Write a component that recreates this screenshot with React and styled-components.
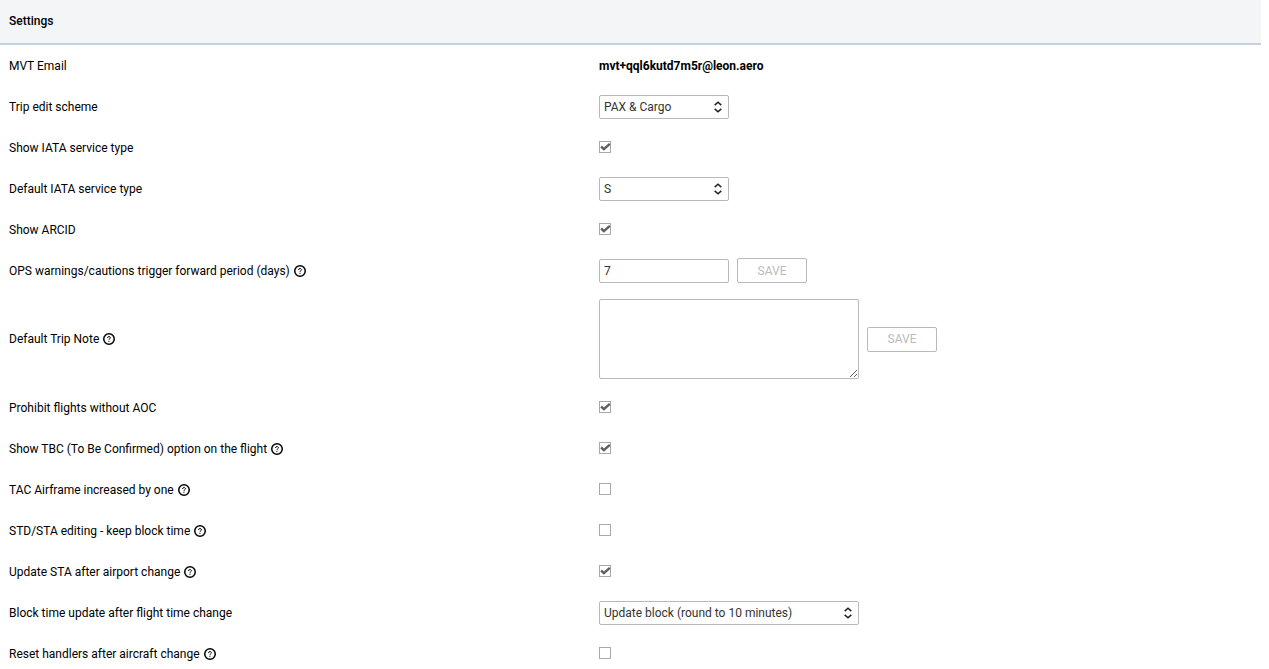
import React, { useId, useState } from "react";
import styled, { createGlobalStyle, css } from "styled-components";

const GlobalStyle = createGlobalStyle`
  *, *::before, *::after { box-sizing: border-box; }
  html { scrollbar-width: none; }
  body {
    margin: 0;
    background: #fff;
    color: #000;
    font: 12px/16px Roboto, "Liberation Sans", sans-serif;
  }
`;

const Panel = styled.main`
  margin-right: 8px;
`;

const PanelHeader = styled.header`
  padding: 13px 9px 14px;
  background: #f4f5f7;
  border-bottom: 2px solid #c3d1e1;
`;

const Title = styled.h1`
  margin: 0;
  font-size: 12px;
  line-height: 16px;
  font-weight: 500;
`;

const SettingRow = styled.div`
  display: grid;
  grid-template-columns: 590fr 671fr;
  align-items: center;
  min-height: 41px;
`;

const LabelCell = styled.div`
  display: flex;
  align-items: center;
  gap: 4px;
  padding: 8px 9px;
`;

const ControlCell = styled.div`
  display: flex;
  align-items: center;
  gap: 8px;
  padding: 8px 9px;
`;

const field = css`
  border: 1px solid #b9b9b9;
  border-radius: 2px;
  background: #fff;
  color: #333;
  font: inherit;
  outline-color: #7c9cc0;
`;

const SelectBox = styled.div`
  position: relative;
  width: ${(p) => (p.$wide ? 260 : 130)}px;
  height: 24px;
`;

const Select = styled.select`
  ${field}
  display: block;
  width: 100%;
  height: 24px;
  padding: 0 20px 0 4px;
  appearance: none;
`;

const SelectArrows = styled.svg`
  position: absolute;
  top: 6px;
  right: 6px;
  width: 10px;
  height: 12px;
  pointer-events: none;
`;

const TextInput = styled.input`
  ${field}
  width: 130px;
  height: 24px;
  padding: 0 4px;
`;

const TextArea = styled.textarea`
  ${field}
  width: 260px;
  height: 80px;
  padding: 4px;
  resize: both;
`;

const SaveButton = styled.button`
  width: 70px;
  height: 25px;
  padding: 0;
  border: 1px solid #b9b9b9;
  border-radius: 2px;
  background: #fff;
  color: #bbb;
  font: inherit;
`;

const CheckWrap = styled.span`
  position: relative;
  display: block;
  width: 12px;
  height: 12px;
  margin-bottom: 1px;
`;

const CheckInput = styled.input`
  display: block;
  width: 12px;
  height: 12px;
  margin: 0;
  border: 1px solid #a9a9a9;
  background: #fff;
  appearance: none;
`;

const CheckMark = styled.svg`
  position: absolute;
  inset: 0;
  pointer-events: none;
`;

const HelpSvg = styled.svg`
  display: block;
  width: 12px;
  height: 12px;
`;

const Address = styled.strong`
  font-weight: 700;
`;

function HelpIcon() {
  return (
    <HelpSvg viewBox="0 0 12 12" fill="none" stroke="#000" aria-hidden="true">
      <circle cx="6" cy="6" r="5.25" strokeWidth="1.5" />
      <path d="M4.4 4.9c.1-.9.8-1.3 1.6-1.3s1.5.4 1.5 1.1c0 .9-1.4 1-1.5 2.1" strokeWidth="1" />
      <path d="M5.9 7.7v1.1" strokeWidth="1.1" />
    </HelpSvg>
  );
}

function Setting({ label, help, children }) {
  const id = useId();
  return (
    <SettingRow>
      <LabelCell>
        {children.type === Address ? <span>{label}</span> : <label htmlFor={id}>{label}</label>}
        {help && <HelpIcon />}
      </LabelCell>
      <ControlCell>{React.cloneElement(children, { id })}</ControlCell>
    </SettingRow>
  );
}

function Check({ id, on = false }) {
  const [checked, setChecked] = useState(on);
  return (
    <CheckWrap>
      <CheckInput id={id} type="checkbox" checked={checked} onChange={(e) => setChecked(e.target.checked)} />
      {checked && (
        <CheckMark width="12" height="12" viewBox="0 0 12 12" aria-hidden="true">
          <path d="M2.1 5.5L4.9 8.1L10.8 2.8" fill="none" stroke="#606060" strokeWidth="2.4" />
        </CheckMark>
      )}
    </CheckWrap>
  );
}

function Dropdown({ id, wide, options }) {
  return (
    <SelectBox $wide={wide}>
      <Select id={id}>
        {options.map((o) => (
          <option key={o}>{o}</option>
        ))}
      </Select>
      <SelectArrows viewBox="0 0 10 12" fill="none" stroke="#222" strokeWidth="1.5" aria-hidden="true">
        <path d="M1.7 4.1L5 1.2l3.3 2.9M1.7 7.9L5 10.8l3.3-2.9" />
      </SelectArrows>
    </SelectBox>
  );
}

function DaysField({ id }) {
  return (
    <>
      <TextInput id={id} type="text" defaultValue="7" />
      <SaveButton type="button" disabled>SAVE</SaveButton>
    </>
  );
}

function NoteField({ id }) {
  return (
    <>
      <TextArea id={id} />
      <SaveButton type="button" disabled>SAVE</SaveButton>
    </>
  );
}

export default function App() {
  return (
    <>
      <GlobalStyle />
      <Panel>
        <PanelHeader>
          <Title>Settings</Title>
        </PanelHeader>
        <Setting label="MVT Email"><Address>mvt+qql6kutd7m5r@leon.aero</Address></Setting>
        <Setting label="Trip edit scheme"><Dropdown options={["PAX & Cargo"]} /></Setting>
        <Setting label="Show IATA service type"><Check on /></Setting>
        <Setting label="Default IATA service type"><Dropdown options={["S"]} /></Setting>
        <Setting label="Show ARCID"><Check on /></Setting>
        <Setting label="OPS warnings/cautions trigger forward period (days)" help><DaysField /></Setting>
        <Setting label="Default Trip Note" help><NoteField /></Setting>
        <Setting label="Prohibit flights without AOC"><Check on /></Setting>
        <Setting label="Show TBC (To Be Confirmed) option on the flight" help><Check on /></Setting>
        <Setting label="TAC Airframe increased by one" help><Check /></Setting>
        <Setting label="STD/STA editing - keep block time" help><Check /></Setting>
        <Setting label="Update STA after airport change" help><Check on /></Setting>
        <Setting label="Block time update after flight time change"><Dropdown wide options={["Update block (round to 10 minutes)"]} /></Setting>
        <Setting label="Reset handlers after aircraft change" help><Check /></Setting>
      </Panel>
    </>
  );
}
